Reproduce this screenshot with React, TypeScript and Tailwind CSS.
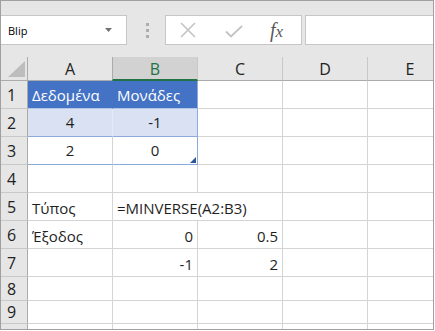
import React from "react";

const W = "w-[85px] min-w-[85px]";

function HeaderCell({ label, active }: { label: string; active?: boolean }) {
  return (
    <div
      className={`${W} h-full flex items-center justify-center border-r border-[#c8c8c8] ${
        active
          ? "bg-[#d2d2d2] text-[#217346] border-b-2 border-b-[#217346] border-l border-l-[#ababab] -ml-px w-[86px] min-w-[86px]"
          : "border-b border-b-[#ababab] text-[#222]"
      }`}
    >
      <span className="text-[16px] leading-[20px] pt-[1px]">{label}</span>
    </div>
  );
}

type CellProps = {
  children?: React.ReactNode;
  className?: string;
  align?: "left" | "center" | "right";
};

function Cell({ children, className = "", align = "left" }: CellProps) {
  const j = align === "left" ? "justify-start pl-[4px]" : align === "center" ? "justify-center" : "justify-end pr-[4px]";
  return (
    <div className={`${W} h-full flex items-end ${j} whitespace-nowrap overflow-visible ${className}`}>
      {children}
    </div>
  );
}

function RowHead({ n }: { n: number }) {
  return (
    <div className="w-[27px] min-w-[27px] h-full bg-[#e6e6e6] border-r border-r-[#ababab] border-b border-b-[#c8c8c8] flex items-center pl-[6px] text-[16px] leading-[20px] text-[#222]">
      {n}
    </div>
  );
}

function Row({
  n,
  h,
  children,
}: {
  n: number;
  h: string;
  children: React.ReactNode;
}) {
  return (
    <div className={`flex ${h} shrink-0`}>
      <RowHead n={n} />
      {children}
    </div>
  );
}

const g = "border-r border-b border-[#d4d4d4]";

export default function App() {
  return (
    <div className="w-[435px] h-[331px] bg-white" style={{ fontFamily: '"Open Sans", "Noto Sans", sans-serif' }}>
      <div className="w-[434px] h-[330px] border border-[#a0a0a0] flex flex-col overflow-hidden bg-white">
        {/* toolbar */}
        <div className="h-[56px] shrink-0 bg-[#e6e6e6] flex items-start pt-[14px]">
          <div className="w-[126px] h-[30px] bg-white border-y border-r border-[#c6c6c6] flex items-center pl-[7px] pr-[14px] justify-between">
            <span className="text-[11px] text-black leading-none">Blip</span>
            <svg width="7" height="4" viewBox="0 0 7 4">
              <polygon points="0,0 7,0 3.5,4" fill="#737373" />
            </svg>
          </div>
          <div className="w-[38px] h-[30px] flex flex-col items-center justify-center gap-[3px] pl-[3px]">
            <div className="w-[3px] h-[3px] bg-[#adadad]" />
            <div className="w-[3px] h-[3px] bg-[#adadad]" />
            <div className="w-[3px] h-[3px] bg-[#adadad]" />
          </div>
          <div className="w-[137px] h-[30px] bg-white border border-[#c6c6c6] flex items-center">
            <svg width="16" height="16" viewBox="0 0 16 16" className="ml-[14px]">
              <path d="M1 1 L15 15 M15 1 L1 15" stroke="#c3c3c3" strokeWidth="1.6" />
            </svg>
            <svg width="18" height="13" viewBox="0 0 18 13" className="ml-[29px] mt-[3px]">
              <path d="M1 6.5 L6 11.5 L17 1" stroke="#c3c3c3" strokeWidth="1.8" fill="none" />
            </svg>
            <span
              className="ml-[27px] text-[20px] italic text-[#5a5a5a] leading-none"
              style={{ fontFamily: '"Liberation Serif", "DejaVu Serif", serif' }}
            >
              f<span className="text-[17px]">x</span>
            </span>
          </div>
          <div className="flex-1 h-[30px] ml-[3px] bg-white border-y border-l border-[#c6c6c6]" />
        </div>

        {/* column header */}
        <div className="flex h-[24px] shrink-0 bg-[#e6e6e6]">
          <div className="w-[27px] min-w-[27px] h-full border-r border-[#ababab] border-b border-b-[#ababab] relative">
            <svg width="17" height="16" viewBox="0 0 17 16" className="absolute left-[7px] top-[4px]">
              <polygon points="17,0 17,16 0,16" fill="#bdbdbd" />
            </svg>
          </div>
          <HeaderCell label="A" />
          <HeaderCell label="B" active />
          <HeaderCell label="C" />
          <HeaderCell label="D" />
          <HeaderCell label="E" />
        </div>

        <div className="text-[15px] leading-[20px] text-[#1f1f1f]">
          <Row n={1} h="h-[28px]">
            <Cell className="bg-[#4472c4] text-white border-b border-b-[#b4c6e7] border-r border-r-[#4472c4] pb-[3px]">Δεδομένα</Cell>
            <Cell className="bg-[#4472c4] text-white border-b border-b-[#b4c6e7] border-r border-r-[#8ea9db] pb-[3px]">Μονάδες</Cell>
            <Cell className={g} />
            <Cell className={g} />
            <Cell className={g} />
          </Row>
          <Row n={2} h="h-[28px]">
            <Cell align="center" className="bg-[#d9e1f2] border-b border-b-[#8ea9db] border-r border-r-[#e4e9f5] pb-[4px]">4</Cell>
            <Cell align="center" className="bg-[#d9e1f2] border-b border-b-[#8ea9db] border-r border-r-[#8ea9db] pb-[4px]">-1</Cell>
            <Cell className={g} />
            <Cell className={g} />
            <Cell className={g} />
          </Row>
          <Row n={3} h="h-[28px]">
            <Cell align="center" className="bg-white border-b border-b-[#8ea9db] border-r border-r-[#d4d4d4] pb-[4px]">2</Cell>
            <Cell align="center" className="bg-white border-b border-b-[#8ea9db] border-r border-r-[#8ea9db] pb-[4px] relative">
              0
              <svg width="6" height="6" viewBox="0 0 6 6" className="absolute right-[1px] bottom-[1px]">
                <polygon points="6,0 6,6 0,6" fill="#2f5597" />
              </svg>
            </Cell>
            <Cell className={g} />
            <Cell className={g} />
            <Cell className={g} />
          </Row>
          <Row n={4} h="h-[28px]">
            <Cell className={g} />
            <Cell className={g} />
            <Cell className={g} />
            <Cell className={g} />
            <Cell className={g} />
          </Row>
          <Row n={5} h="h-[28px]">
            <Cell className={`${g} pb-[2px]`}>Τύπος</Cell>
            <Cell className="border-b border-[#d4d4d4] pb-[2px] relative z-10">=MINVERSE(A2:B3)</Cell>
            <Cell className={g} />
            <Cell className={g} />
            <Cell className={g} />
          </Row>
          <Row n={6} h="h-[28px]">
            <Cell className={`${g} pb-[2px]`}>Έξοδος</Cell>
            <Cell align="right" className={`${g} pb-[2px]`}>0</Cell>
            <Cell align="right" className={`${g} pb-[2px]`}>0.5</Cell>
            <Cell className={g} />
            <Cell className={g} />
          </Row>
          <Row n={7} h="h-[28px]">
            <Cell className={g} />
            <Cell align="right" className={`${g} pb-[2px]`}>-1</Cell>
            <Cell align="right" className={`${g} pb-[2px]`}>2</Cell>
            <Cell className={g} />
            <Cell className={g} />
          </Row>
          <Row n={8} h="h-[24px]">
            <Cell className={g} />
            <Cell className={g} />
            <Cell className={g} />
            <Cell className={g} />
            <Cell className={g} />
          </Row>
          <Row n={9} h="h-[23px]">
            <Cell className={g} />
            <Cell className={g} />
            <Cell className={g} />
            <Cell className={g} />
            <Cell className={g} />
          </Row>
          <div className="flex h-[10px]">
            <div className="w-[27px] min-w-[27px] h-full bg-[#e6e6e6] border-r border-r-[#ababab]" />
            <Cell className="border-r border-[#d4d4d4]" />
            <Cell className="border-r border-[#d4d4d4]" />
            <Cell className="border-r border-[#d4d4d4]" />
            <Cell className="border-r border-[#d4d4d4]" />
            <Cell />
          </div>
        </div>
      </div>
    </div>
  );
}
